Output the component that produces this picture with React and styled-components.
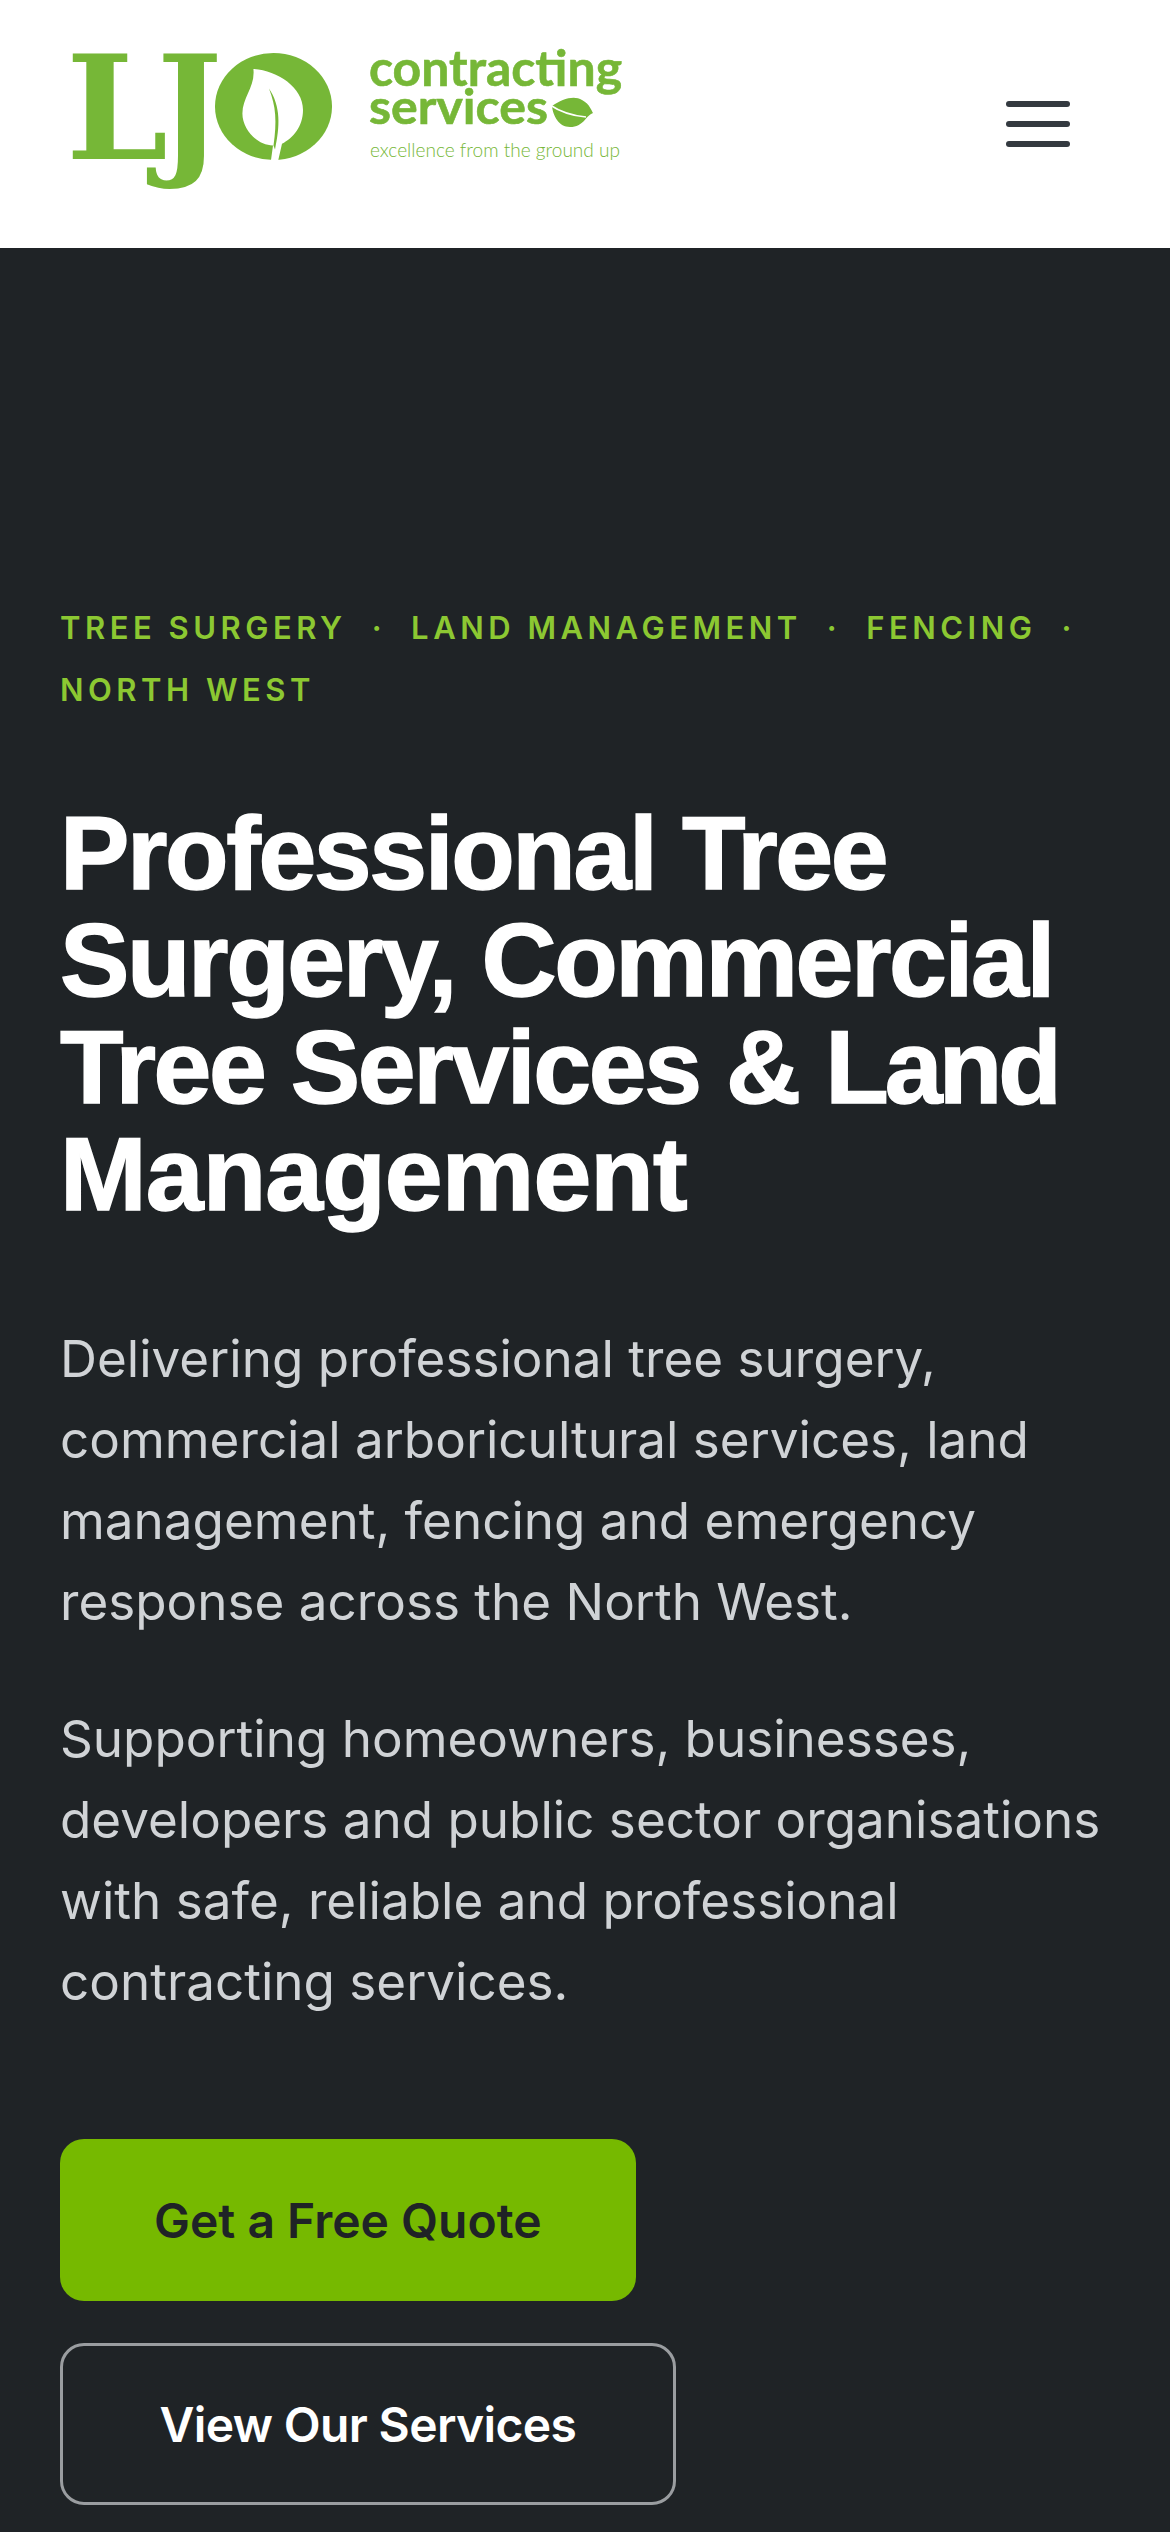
import React from "react";
import styled, { createGlobalStyle } from "styled-components";

const Global = createGlobalStyle`
  html, body { margin: 0; padding: 0; background: #1f2326; }
  * { box-sizing: border-box; }
`;

const Page = styled.div`
  width: 1170px;
  font-family: Inter, "Liberation Sans", sans-serif;
`;

const Header = styled.header`
  height: 248px;
  background: #fff;
  display: flex;
  align-items: center;
  justify-content: space-between;
  padding: 0 100px 0 60px;
`;

const LogoSvg = styled.svg`
  display: block;
  width: 600px;
  height: 248px;
`;

const Toggler = styled.button`
  padding: 0;
  border: 0;
  background: none;
  width: 64px;
  height: 46px;
  display: flex;
  flex-direction: column;
  justify-content: space-between;
`;

const Bar = styled.span`
  display: block;
  height: 6px;
  border-radius: 3px;
  background: #343a40;
`;

const Hero = styled.section`
  background: #1f2326;
  padding: 349px 60px 27px;
`;

const Eyebrow = styled.div`
  display: flex;
  flex-wrap: wrap;
  column-gap: 25px;
  font-size: 31px;
  font-weight: 600;
  line-height: 62px;
  letter-spacing: 4.5px;
  color: #8cc832;
  margin: 0 0 79px;
`;

const Heading = styled.h1`
  margin: 0 0 90px;
  font-family: "Liberation Sans", Arial, sans-serif;
  font-size: 104px;
  font-weight: 700;
  line-height: 107px;
  letter-spacing: -2.4px;
  -webkit-text-stroke: 1.5px #fff;
  color: #fff;
`;

const Word = styled.span`
  letter-spacing: ${(p) => p.$spacing};
`;

const Lead = styled.p`
  margin: 0 0 56px;
  font-size: 51.2px;
  line-height: 81px;
  color: #d0d3d6;
`;

const Actions = styled.div`
  display: flex;
  flex-direction: column;
  align-items: flex-start;
  gap: 42px;
  margin-top: 117px;
`;

const Button = styled.a`
  display: flex;
  align-items: center;
  justify-content: center;
  height: 162px;
  padding: 0 ${(p) => (p.$outline ? "96.5px" : "94px")};
  border-radius: 24px;
  font-size: 48px;
  font-weight: 600;
  letter-spacing: ${(p) => (p.$outline ? "-0.65px" : "0")};
  color: ${(p) => (p.$outline ? "#fff" : "#1f2326")};
  background: ${(p) => (p.$outline ? "transparent" : "#76b900")};
  border: ${(p) => (p.$outline ? "3px solid #9a9da0" : "0")};
`;

const G = "#76b737";

function Logo() {
  return (
    <LogoSvg viewBox="60 0 600 248" aria-label="LJO contracting services">
      <text x="66" y="159" fill={G} fontFamily="'DejaVu Serif', serif" fontWeight="700" fontSize="144" textLength="102" lengthAdjust="spacingAndGlyphs">L</text>
      <text x="157" y="159" fill={G} fontFamily="'DejaVu Serif', serif" fontWeight="700" fontSize="144" textLength="65" lengthAdjust="spacingAndGlyphs">J</text>
      <ellipse cx="273.5" cy="106.5" rx="58.5" ry="53.5" fill={G} />
      <path fill="#fff" d="M253.4 69C277 70.5 303 87 303 110C303 126.5 293 138 282 143.8L278.3 160L271 160L273 145.5C257.4 145.5 242.4 129.5 242.4 113.5C242.4 97 255.4 87 253.4 69Z" />
      <path fill={G} d="M269 88.5C281 106.5 280 126.5 275 149.5L273.5 145.5C277 121.5 276 106.5 269 88.5Z" />
      <text x="369" y="86" fill={G} stroke={G} strokeWidth="0.6" fontFamily="Lato, sans-serif" fontWeight="700" fontSize="50" textLength="253" lengthAdjust="spacingAndGlyphs">contracting</text>
      <text x="369" y="124" fill={G} stroke={G} strokeWidth="0.6" fontFamily="Lato, sans-serif" fontWeight="700" fontSize="48" textLength="179" lengthAdjust="spacingAndGlyphs">services</text>
      <path fill={G} d="M552 106C562 99 574 95 582 100C590 104 592 112 593 113C585 116 584 127 570 127C559 127 553 116 552 106Z" />
      <path fill="none" stroke="#fff" strokeWidth="1.6" d="M550 105C562 113 574 116 586 117" />
      <text x="370" y="157" fill={G} fontFamily="Lato, sans-serif" fontWeight="300" fontSize="20" textLength="250" lengthAdjust="spacingAndGlyphs">excellence from the ground up</text>
    </LogoSvg>
  );
}

export default function App() {
  return (
    <Page>
      <Global />
      <Header>
        <Logo />
        <Toggler aria-label="Menu">
          <Bar />
          <Bar />
          <Bar />
        </Toggler>
      </Header>
      <Hero>
        <Eyebrow>
          <span>TREE SURGERY</span>
          <span>·</span>
          <span>LAND MANAGEMENT</span>
          <span>·</span>
          <span>FENCING</span>
          <span>·</span>
          <span>NORTH WEST</span>
        </Eyebrow>
        <Heading>
          Professional Tree Surgery, Commercial Tree Services &amp;{" "}
          <Word $spacing="-4px">Land</Word> <Word $spacing="-0.9px">Management</Word>
        </Heading>
        <Lead>
          Delivering professional tree surgery, commercial arboricultural services, land
          management, fencing and emergency response across the North West.
        </Lead>
        <Lead>
          Supporting homeowners, businesses, developers and public sector organisations with
          safe, reliable and professional contracting services.
        </Lead>
        <Actions>
          <Button>Get a Free Quote</Button>
          <Button $outline>View Our Services</Button>
        </Actions>
      </Hero>
    </Page>
  );
}
